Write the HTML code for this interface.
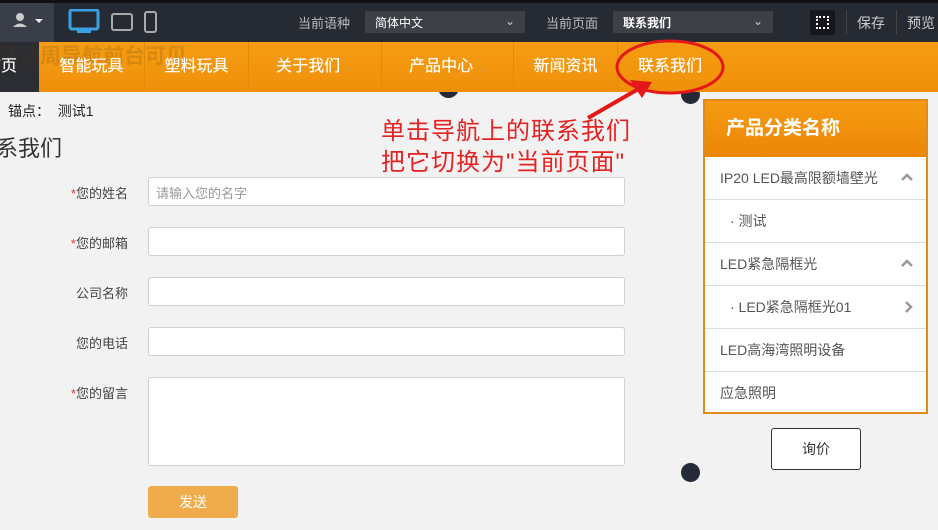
<!DOCTYPE html>
<html><head><meta charset="utf-8"><style>
*{margin:0;padding:0;box-sizing:border-box}
body{width:938px;height:530px;overflow:hidden;background:#f2f2f2;font-family:"Liberation Sans","Noto Sans CJK SC",sans-serif;position:relative;color:#333}
.a{position:absolute}
.top{left:0;top:0;width:938px;height:42px;background:#262a33;border-top:3px solid #111}
.nav{left:0;top:42px;width:938px;height:50px;background:linear-gradient(#f59c12,#f0900a)}
.ni{top:42px;height:50px;line-height:50px;color:#fff;font-size:16px;text-align:center;text-shadow:0 0 0.4px #fff}
.sep{top:42px;width:1px;height:50px;background:#e48a08}
.lbl{width:128px;text-align:right;font-size:13px;color:#444;left:0}
.lbl i{color:#e33;font-style:normal}
.inp{left:148px;width:477px;height:29px;background:#fff;border:1px solid #d0d0d0;border-radius:3px;font-size:13px;color:#999;padding:5px 7px}
.row{left:705px;width:221px;height:43px;border-bottom:1px solid #ddd;font-size:14px;color:#555;line-height:43px;padding-left:15px}
.dot{background:#262a38;border-radius:50%}
.chev{position:absolute;right:12px;top:15px}
</style></head><body>
<div class="a top"></div>
<div class="a" style="left:0;top:3px;width:54px;height:39px;background:#3a3e48"></div>
<svg class="a" style="left:10px;top:12px" width="36" height="18"><circle cx="10" cy="5" r="4" fill="#ccc"/><path d="M3 15 Q10 8 17 15Z" fill="#ccc"/><path d="M25 7 L33 7 L29 11Z" fill="#eee"/></svg>
<svg class="a" style="left:68px;top:9px" width="95" height="26"><rect x="2" y="1" width="28" height="19" rx="2" fill="none" stroke="#3aa1e6" stroke-width="3"/><rect x="9" y="21" width="14" height="3" fill="#3aa1e6"/><rect x="44" y="5" width="20" height="16" rx="2" fill="none" stroke="#aaa" stroke-width="2"/><rect x="77" y="3" width="11" height="20" rx="2" fill="none" stroke="#aaa" stroke-width="2"/></svg>
<div class="a" style="left:298px;top:13px;font-size:13px;color:#bbb">当前语种</div>
<div class="a" style="left:365px;top:11px;width:160px;height:22px;background:#3e4048;color:#fff;font-size:12px;padding:3px 10px">简体中文<span style="float:right;color:#ccc">⌄</span></div>
<div class="a" style="left:546px;top:13px;font-size:13px;color:#bbb">当前页面</div>
<div class="a" style="left:613px;top:11px;width:160px;height:22px;background:#3e4048;color:#fff;font-size:12px;padding:3px 10px;font-weight:bold">联系我们<span style="float:right;color:#ccc;font-weight:normal">⌄</span></div>
<div class="a" style="left:810px;top:10px;width:25px;height:25px;background:#15171c;border-radius:2px"><div style="margin:6px;width:13px;height:13px;border:2px dotted #fff"></div></div>
<div class="a" style="left:846px;top:10px;width:1px;height:24px;background:#444"></div>
<div class="a" style="left:857px;top:13px;font-size:14px;color:#ccc">保存</div>
<div class="a" style="left:896px;top:10px;width:1px;height:24px;background:#444"></div>
<div class="a" style="left:907px;top:13px;font-size:14px;color:#ccc">预览</div>
<div class="a dot" style="left:438px;top:77px;width:21px;height:21px"></div>
<div class="a dot" style="left:681px;top:85px;width:19px;height:19px"></div>
<div class="a nav"></div>
<div class="a" style="left:0;top:42px;width:39px;height:50px;background:#2b2d33"></div>
<div class="a" style="left:-2px;top:40px;font-size:21px;font-weight:bold;color:rgba(90,60,20,.18);white-space:nowrap">活动周导航前台可见</div>
<div class="a ni" style="left:-19px;width:40px">首页</div>
<div class="a ni" style="left:39px;width:105px">智能玩具</div>
<div class="a sep" style="left:144px"></div>
<div class="a ni" style="left:145px;width:103px">塑料玩具</div>
<div class="a sep" style="left:248px"></div>
<div class="a ni" style="left:249px;width:132px">关于我们 <span style="color:#d88a20;font-size:11px">⌄</span></div>
<div class="a sep" style="left:381px"></div>
<div class="a ni" style="left:382px;width:132px">产品中心 <span style="color:#d88a20;font-size:11px">⌄</span></div>
<div class="a sep" style="left:513px"></div>
<div class="a ni" style="left:514px;width:103px">新闻资讯</div>
<div class="a sep" style="left:617px"></div>
<div class="a ni" style="left:618px;width:104px">联系我们</div>
<div class="a dot" style="left:681px;top:463px;width:19px;height:19px"></div>
<div class="a" style="left:8px;top:101px;font-size:14px;color:#222">锚点：&nbsp; 测试1</div>
<div class="a" style="left:-4px;top:131px;font-size:22px;color:#333">系我们</div>
<div class="a lbl" style="top:183px"><i>*</i>您的姓名</div>
<div class="a inp" style="top:177px">请输入您的名字</div>
<div class="a lbl" style="top:233px"><i>*</i>您的邮箱</div>
<div class="a inp" style="top:227px"></div>
<div class="a lbl" style="top:283px">公司名称</div>
<div class="a inp" style="top:277px"></div>
<div class="a lbl" style="top:333px">您的电话</div>
<div class="a inp" style="top:327px"></div>
<div class="a lbl" style="top:383px"><i>*</i>您的留言</div>
<div class="a inp" style="top:377px;height:89px"></div>
<div class="a" style="left:148px;top:486px;width:90px;height:32px;background:#f0ac4c;border-radius:3px;color:#fff;font-size:14px;text-align:center;line-height:32px">发送</div>
<div class="a" style="left:381px;top:116px;font-size:24px;letter-spacing:1px;color:#e52222;line-height:31px;white-space:nowrap">单击导航上的联系我们<br>把它切换为"当前页面"</div>
<svg class="a" style="left:0;top:0" width="938" height="530"><ellipse cx="670" cy="67" rx="53" ry="26" fill="none" stroke="#e41818" stroke-width="3"/><path d="M588 118 L640 88" stroke="#e41818" stroke-width="4"/><path d="M630 80 L652 82 L642 98Z" fill="#e41818"/></svg>
<div class="a" style="left:703px;top:99px;width:225px;height:315px;border:2px solid #e08a1a;background:#fff"></div>
<div class="a" style="left:705px;top:101px;width:221px;height:56px;background:linear-gradient(#f59a12,#ec8706);color:#fff;font-size:19px;font-weight:bold;line-height:56px;padding-left:21px">产品分类名称</div>
<div class="a row" style="top:157px">IP20 LED最高限额墙壁光<svg class="chev" width="14" height="10"><path d="M2 8 L7 3 L12 8" fill="none" stroke="#999" stroke-width="2.5"/></svg></div>
<div class="a row" style="top:200px;padding-left:25px">· 测试</div>
<div class="a row" style="top:243px">LED紧急隔框光<svg class="chev" width="14" height="10"><path d="M2 8 L7 3 L12 8" fill="none" stroke="#999" stroke-width="2.5"/></svg></div>
<div class="a row" style="top:286px;padding-left:25px">· LED紧急隔框光01<svg class="chev" style="right:13px;top:14px" width="10" height="14"><path d="M3 2 L8 7 L3 12" fill="none" stroke="#999" stroke-width="2.5"/></svg></div>
<div class="a row" style="top:329px">LED高海湾照明设备</div>
<div class="a row" style="top:372px;border:none">应急照明</div>
<div class="a" style="left:771px;top:428px;width:90px;height:42px;border:1px solid #333;border-radius:3px;background:#fff;font-size:14px;text-align:center;line-height:40px">询价</div>
</body></html>
